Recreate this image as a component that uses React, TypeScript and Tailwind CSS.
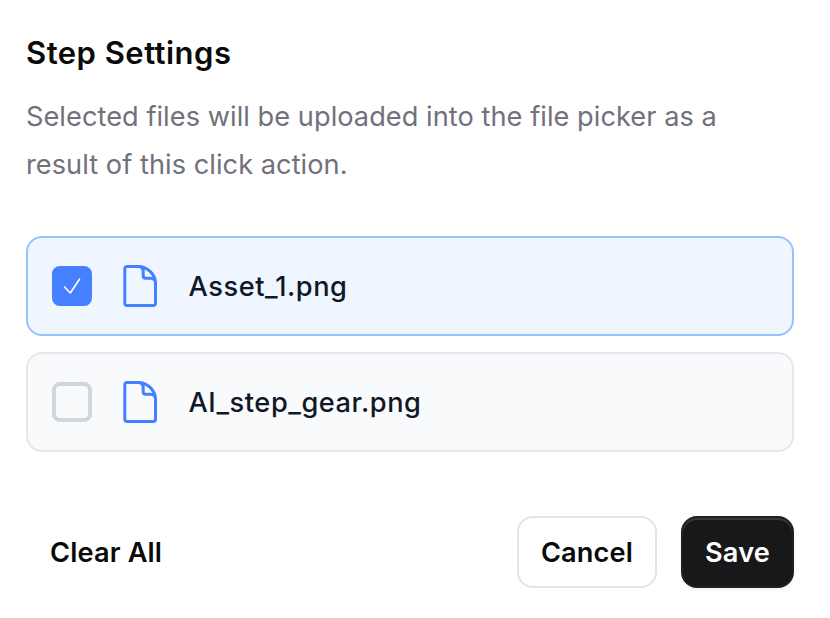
import React from "react";

const files = [
  { name: "Asset_1.png", selected: true },
  { name: "AI_step_gear.png", selected: false },
];

function FileIcon() {
  return (
    <svg width="36" height="44" viewBox="0 0 36 44" fill="none" stroke="#4480ff" strokeWidth="3" strokeLinecap="round" strokeLinejoin="round">
      <path d="M16.500 2.500H5A2.200 2.200 0 0 0 2.800 4.700V39.300A2.200 2.200 0 0 0 5 41.500H31.300A2.200 2.200 0 0 0 33.500 39.300V19.500C33.500 16.500 31.500 14.300 28.500 14.300H23.500A2.300 2.300 0 0 1 21.200 12V7.500C21.200 4.500 19.500 2.500 16.500 2.500C25.500 2.500 33.500 10.500 33.500 19.500" />
    </svg>
  );
}

function FileRow({ name, selected }: { name: string; selected: boolean }) {
  return (
    <div className={`flex h-[100px] items-center rounded-[16px] border-2 pl-6 ${selected ? "border-[#96c2ff] bg-[#eff6ff]" : "border-[#e5e7eb] bg-[#f9fafc]"}`}>
      <div className={`flex size-10 items-center justify-center rounded-[8px] ${selected ? "bg-[#4480ff]" : "border-4 border-[#d1d5dc]"}`}>
        {selected && (
          <svg width="20" height="20" viewBox="0 0 20 20" fill="none" stroke="white" strokeWidth="1.6" strokeLinecap="round" strokeLinejoin="round">
            <path d="M2.500 11L8.300 17L17.500 3.200" />
          </svg>
        )}
      </div>
      <div className="ml-[30px]"><FileIcon /></div>
      <span className="ml-[30.500px] pt-px text-[27.200px] leading-10 font-medium tracking-[0.560px] text-[#101828]">{name}</span>
    </div>
  );
}

export default function App() {
  return (
    <main className="h-[618px] w-[830px] overflow-hidden bg-white pt-[29px] pr-9 pl-[26px] font-['Inter',sans-serif] text-[#0a0a0a]">
      <h1 className="text-[31px] leading-[48px] font-semibold tracking-[0.480px]">Step Settings</h1>
      <p className="mt-4 w-[740px] text-[27.200px] leading-12 tracking-[0.040px] text-[#71717b]">Selected files will be uploaded into the file picker as a result of this click action.</p>
      <div className="mt-[47px] flex flex-col gap-4">
        {files.map((file) => <FileRow key={file.name} {...file} />)}
      </div>
      <div className="mt-16 flex items-center text-[27.200px] font-semibold tracking-[0.150px]">
        <button className="h-[72px] px-6 pt-[3px]">Clear All</button>
        <button className="ml-auto h-[72px] w-[140px] rounded-[16px] border-2 border-[#e4e4e7] pt-[3px]">Cancel</button>
        <button className="ml-6 h-[72px] w-[113px] rounded-[16px] border-2 border-[#202022] bg-[#18181b] pt-[3px] text-white shadow-[inset_0_2px_0_#3a3a3c,0_2px_4px_#0000000d]">Save</button>
      </div>
    </main>
  );
}
